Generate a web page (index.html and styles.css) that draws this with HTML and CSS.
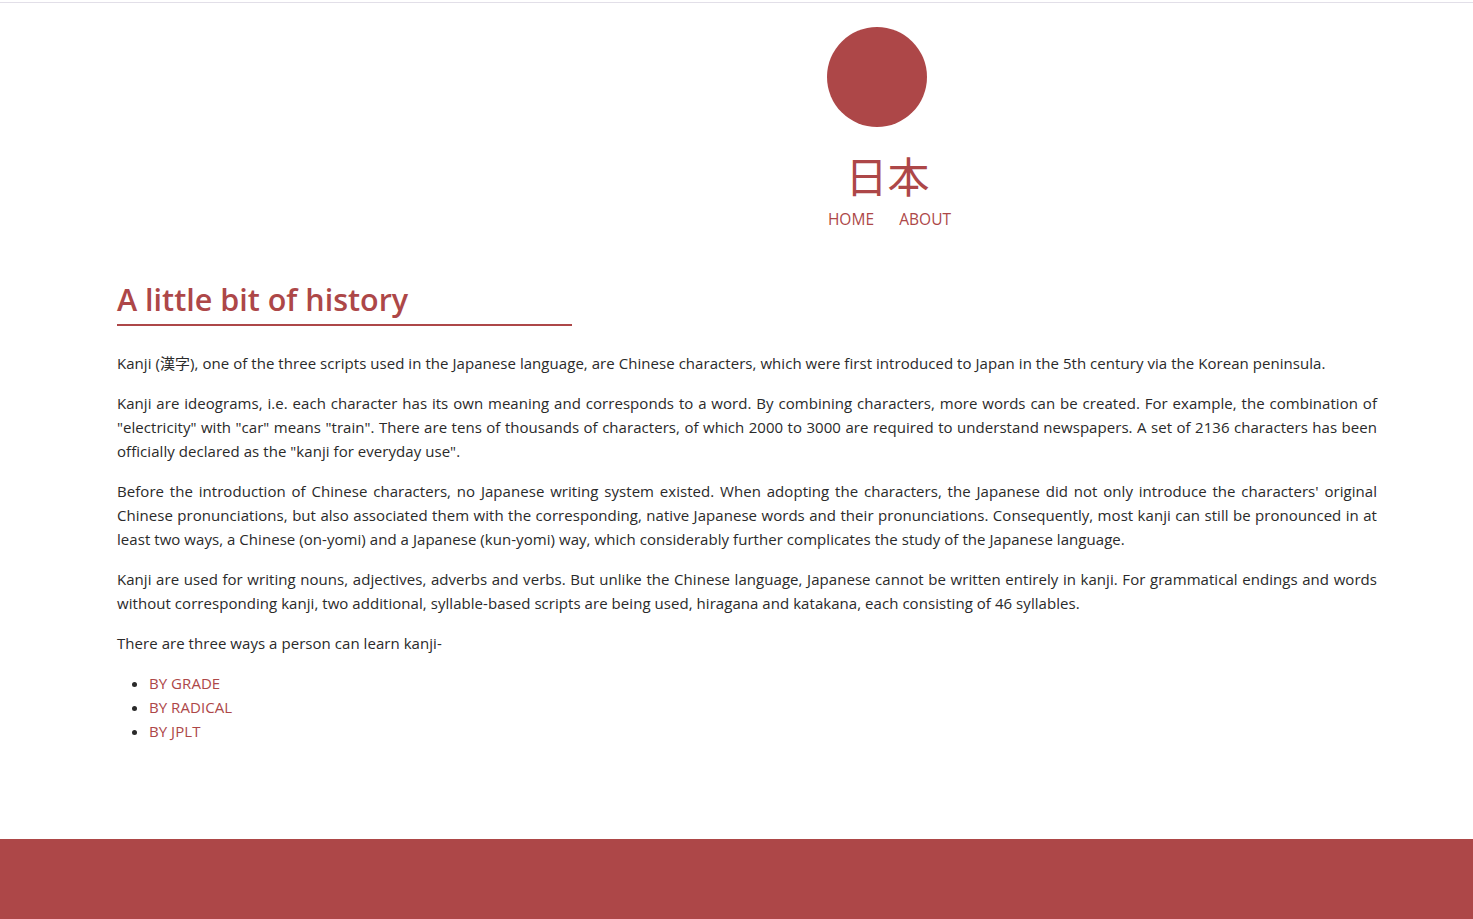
FILE: index.html
```html
<!DOCTYPE html>
<html lang="en">
<head>
<meta charset="utf-8">
<title>日本 - Kanji</title>
<link rel="stylesheet" href="styles.css">
</head>
<body>
<div class="topline"></div>
<header class="site-header">
  <div class="sun"></div>
  <h1 class="site-title">日本</h1>
  <nav class="nav">
    <a href="#">HOME</a>
    <a href="#">ABOUT</a>
  </nav>
</header>
<main class="content">
  <h2 class="section-title">A little bit of history</h2>
  <p>Kanji (漢字), one of the three scripts used in the Japanese language, are Chinese characters, which were first introduced to Japan in the 5th century via the Korean peninsula.</p>
  <p>Kanji are ideograms, i.e. each character has its own meaning and corresponds to a word. By combining characters, more words can be created. For example, the combination of "electricity" with "car" means "train". There are tens of thousands of characters, of which 2000 to 3000 are required to understand newspapers. A set of 2136 characters has been officially declared as the "kanji for everyday use".</p>
  <p>Before the introduction of Chinese characters, no Japanese writing system existed. When adopting the characters, the Japanese did not only introduce the characters' original Chinese pronunciations, but also associated them with the corresponding, native Japanese words and their pronunciations. Consequently, most kanji can still be pronounced in at least two ways, a Chinese (on-yomi) and a Japanese (kun-yomi) way, which considerably further complicates the study of the Japanese language.</p>
  <p>Kanji are used for writing nouns, adjectives, adverbs and verbs. But unlike the Chinese language, Japanese cannot be written entirely in kanji. For grammatical endings and words without corresponding kanji, two additional, syllable-based scripts are being used, hiragana and katakana, each consisting of 46 syllables.</p>
  <p>There are three ways a person can learn kanji-</p>
  <ul class="ways">
    <li><a href="#">BY GRADE</a></li>
    <li><a href="#">BY RADICAL</a></li>
    <li><a href="#">BY JPLT</a></li>
  </ul>
</main>
<footer class="site-footer"></footer>
</body>
</html>
```

FILE: styles.css
```css
html, body {
  margin: 0;
  padding: 0;
  background: #fff;
}
body {
  font-family: "Open Sans", "Noto Sans CJK JP", sans-serif;
  font-size: 15px;
  letter-spacing: 0.05px;
  line-height: 24px;
  color: #2a2a2a;
}
.topline {
  margin-top: 2px;
  height: 1px;
  background: #e2dfe8;
}
.site-header {
  display: flex;
  flex-direction: column;
  align-items: center;
  padding-left: 302px;
  padding-top: 24px;
}
.sun {
  width: 100px;
  height: 100px;
  border-radius: 50%;
  background: #ad4748;
  margin-right: 22px;
}
.site-title {
  margin: 20px 0 0;
  font-family: "Noto Sans CJK JP", sans-serif;
  font-weight: 400;
  font-size: 42px;
  line-height: 56px;
  color: #ad4748;
}
.nav {
  display: flex;
  gap: 25px;
  margin-top: 4px;
  margin-left: 4px;
}
.nav a {
  color: #ad4748;
  text-decoration: none;
  font-size: 15.5px;
  line-height: 24px;
}
.content {
  padding: 46px 96px 80px 117px;
}
.section-title {
  margin: 0 0 25px;
  width: 455px;
  font-size: 30.5px;
  font-weight: 600;
  letter-spacing: 0;
  line-height: 44px;
  color: #ad4748;
  border-bottom: 2px solid #ad4748;
  padding-bottom: 3px;
}
.content p {
  margin: 0 0 16px;
  text-align: justify;
}
.ways {
  margin: 0 0 16px;
  padding-left: 32px;
}
.ways a {
  color: #ad4748;
  text-decoration: none;
}
.site-footer {
  height: 80px;
  background: #ad4748;
}
```
